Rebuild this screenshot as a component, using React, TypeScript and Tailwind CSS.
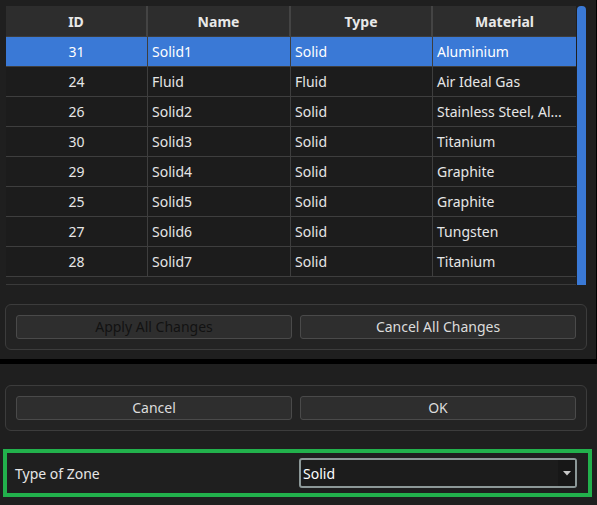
type Zone = {
  id: number;
  name: string;
  type: string;
  material: string;
};

const zones: Zone[] = [
  { id: 31, name: 'Solid1', type: 'Solid', material: 'Aluminium' },
  { id: 24, name: 'Fluid', type: 'Fluid', material: 'Air Ideal Gas' },
  { id: 26, name: 'Solid2', type: 'Solid', material: 'Stainless Steel, Al...' },
  { id: 30, name: 'Solid3', type: 'Solid', material: 'Titanium' },
  { id: 29, name: 'Solid4', type: 'Solid', material: 'Graphite' },
  { id: 25, name: 'Solid5', type: 'Solid', material: 'Graphite' },
  { id: 27, name: 'Solid6', type: 'Solid', material: 'Tungsten' },
  { id: 28, name: 'Solid7', type: 'Solid', material: 'Titanium' },
];

const selectedId = 31;

function PanelButton({ label, disabled }: { label: string; disabled?: boolean }) {
  return (
    <button
      type="button"
      disabled={disabled}
      className={`h-[24px] flex-1 rounded-[3px] border border-[#4a4a4a] bg-[#2e2e2e] text-[14px] leading-none ${
        disabled ? 'text-[#121212]' : 'text-[#dcdcdc]'
      }`}
    >
      {label}
    </button>
  );
}

function ButtonPanel({ left, right, leftDisabled }: { left: string; right: string; leftDisabled?: boolean }) {
  return (
    <div className="mx-[5px] flex h-[46px] w-[582px] items-center gap-[8px] rounded-[6px] border border-[#3c3c3c] bg-[#232323] px-[10px]">
      <PanelButton label={left} disabled={leftDisabled} />
      <PanelButton label={right} />
    </div>
  );
}

export default function App() {
  return (
    <div
      className="flex h-[505px] w-[597px] flex-col bg-black text-[14px] text-[#e6e6e6]"
      style={{ fontFamily: '"Noto Sans", "DejaVu Sans", sans-serif' }}
    >
      <div className="flex h-[359px] w-[596px] flex-col bg-[#1f1f1f] pt-[6px]">
        <div className="ml-[6px] flex h-[279px] w-[581px]">
          <div className="flex w-[570px] flex-col border-b border-[#3a3a3a]">
            <div className="grid h-[31px] grid-cols-[142px_143px_142px_143px] bg-[#2d2d2d] font-bold text-[#e8e8e8]">
              {['ID', 'Name', 'Type', 'Material'].map((h, i) => (
                <div
                  key={h}
                  className={`flex items-center justify-center border-b border-[#3c3c3c] ${
                    i < 3 ? 'border-r-2 border-r-[#444444]' : ''
                  }`}
                >
                  {h}
                </div>
              ))}
            </div>
            {zones.map((z) => {
              const sel = z.id === selectedId;
              return (
                <div
                  key={z.id}
                  className={`grid h-[30px] grid-cols-[142px_143px_142px_143px] border-b border-[#3e3e3e] ${
                    sel ? 'bg-[#3a79d6] text-white' : 'bg-[#1c1c1c]'
                  }`}
                >
                  <div className="flex items-center justify-center border-r border-[#3e3e3e]">{z.id}</div>
                  <div className="flex items-center border-r border-[#3e3e3e] px-[4px]">{z.name}</div>
                  <div className="flex items-center border-r border-[#3e3e3e] px-[4px]">{z.type}</div>
                  <div className="flex items-center whitespace-nowrap px-[4px]">{z.material}</div>
                </div>
              );
            })}
          </div>
          <div className="ml-[1px] w-[9px] rounded-t-[4px] bg-[#3a79d6]" />
        </div>

        <div className="mt-[19px]">
          <ButtonPanel left="Apply All Changes" right="Cancel All Changes" leftDisabled />
        </div>
      </div>

      <div className="mt-[5px] flex flex-1 flex-col bg-[#1f1f1f] pt-[21px]">
        <ButtonPanel left="Cancel" right="OK" />

        <div className="mx-[3px] mt-[18px] flex h-[48px] w-[589px] items-center border-[4px] border-[#22b14c] pl-[8px] pr-[11px]">
          <span className="flex-1">Type of Zone</span>
          <div className="flex h-[30px] w-[278px] items-center rounded-[3px] border-2 border-[#8c9898] bg-[#1c1c1c] pl-[2px]">
            <span className="flex-1 text-white">Solid</span>
            <div className="flex h-full w-[17px] items-center justify-center bg-[#171717]">
              <svg width="8" height="5" viewBox="0 0 8 5">
                <path d="M0 0 H8 L4 4.5 Z" fill="#c8c8c8" />
              </svg>
            </div>
          </div>
        </div>
      </div>
    </div>
  );
}
